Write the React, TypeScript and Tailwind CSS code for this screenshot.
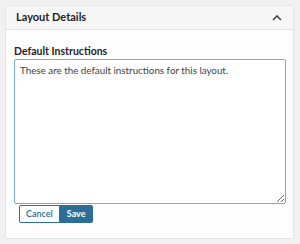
import React from "react";

const App = () => {
  return (
    <div className="w-[300px] h-[244px] bg-[#f0f0f1] p-[5px] font-['Lato',sans-serif]">
      <div className="flex flex-col w-[289px] h-[234px] bg-[#fdfdfd] border border-[#e2e4e7] rounded-[2px]">
        <div className="flex items-center justify-between h-[24px] px-[10px] bg-[#f6f6f6] border-b border-[#e2e4e7]">
          <span className="text-[11px] font-bold text-[#1d2327]">Layout Details</span>
          <svg width="10" height="6" viewBox="0 0 10 6" fill="none" className="mr-[1px]">
            <path d="M1 5 L5 1 L9 5" stroke="#3c434a" strokeWidth="1.6" />
          </svg>
        </div>
        <div className="flex flex-col px-[8px] pt-[14px]">
          <label className="text-[10.5px] font-bold text-[#1d2327] leading-[14px]">
            Default Instructions
          </label>
          <textarea
            defaultValue="These are the default instructions for this layout."
            className="mt-[1px] w-[272px] h-[145px] border border-[#7fa9c8] rounded-[2px] px-[5px] py-[3px] text-[9.8px] leading-[14px] text-[#3c434a] bg-white outline-none resize-y"
          />
          <div className="flex mt-[1px] ml-[5px]">
            <button className="h-[18px] px-[6px] border border-[#2c6e96] bg-white text-[#2c6e96] text-[9px] font-semibold rounded-l-[2px]">
              Cancel
            </button>
            <button className="h-[18px] px-[7px] bg-[#2c6e96] text-white text-[9px] font-bold rounded-r-[2px]">
              Save
            </button>
          </div>
        </div>
      </div>
    </div>
  );
};

export default App;
